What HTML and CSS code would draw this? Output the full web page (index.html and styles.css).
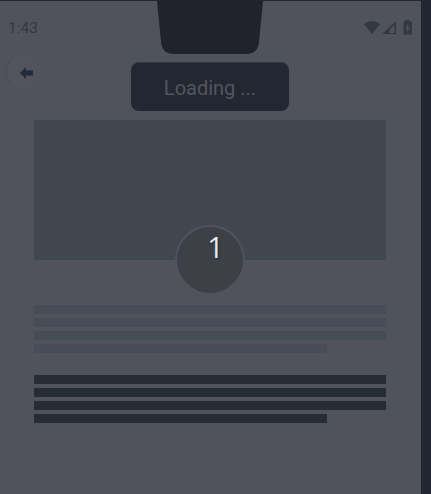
FILE: index.html
```html
<!DOCTYPE html>
<html lang="en">
<head>
<meta charset="utf-8">
<title>Loading</title>
<link rel="stylesheet" href="styles.css">
</head>
<body>
<main class="screen">
  <svg class="notch" width="106" height="53" viewBox="0 0 106 53"><path d="M0 0H106L102 41Q101 53 89 53H17Q5 53 4 41Z" fill="#20232b"/></svg>
  <header class="status">
    <span class="time">1:43</span>
    <svg class="signals" width="49" height="16" viewBox="0 0 49 16" fill="#343841">
      <path d="M0 4Q8-2 16 4L8 14Z"/>
      <path fill-rule="evenodd" d="M18 14L32 1V14ZM25.500 13H30.500V4.800L25.500 9.500Z"/>
      <path fill-rule="evenodd" d="M41.500 0H45.500V1.500H48V14.500H39.500V1.500H41.500ZM44 4L41.500 8.500H43.200V12L46 7.500H44Z"/>
    </svg>
  </header>
  <div class="toolbar">
    <button class="back" aria-label="Back"><svg width="13" height="12" viewBox="0 0 13 12"><path d="M0 6L6 0V3.500H13V8.500H6V12Z" fill="#232a38"/></svg></button>
    <div class="loading">Loading ...</div>
  </div>
  <section class="content">
    <div class="hero"><div class="counter">1</div></div>
    <div class="lines light"><i></i><i></i><i></i><i></i></div>
    <div class="lines dark"><i></i><i></i><i></i><i></i></div>
  </section>
</main>
</body>
</html>
```
FILE: styles.css
```css
* { box-sizing: border-box; }
body {
  margin: 0;
  height: 494px;
  overflow: hidden;
  background: #222630;
  font-family: Roboto, sans-serif;
}
.screen {
  position: relative;
  width: 421px;
  height: 493px;
  margin-top: 1px;
  background: #50535b;
}
.notch { position: absolute; left: 157px; top: 0; }
.status {
  display: flex;
  justify-content: space-between;
  height: 51px;
  padding: 19px 8px 0;
}
.time {
  font-size: 15.5px;
  line-height: 17px;
  color: #34373e;
}
.toolbar {
  display: flex;
  align-items: flex-start;
  height: 68px;
}
.back {
  display: flex;
  align-items: center;
  justify-content: center;
  width: 37px;
  height: 37px;
  margin: 1px 0 0 7px;
  padding: 2px 0 0 1px;
  border: 0;
  border-radius: 50%;
  background: #51545c;
  box-shadow: -1px 0 2px #4b4e54;
}
.loading {
  width: 158px;
  height: 49px;
  margin: 10px 0 0 87px;
  border-radius: 8px;
  border-top: 1px solid #303842;
  background: #222732;
  color: #53565d;
  font-size: 20px;
  line-height: 51px;
  text-align: center;
}
.content { width: 352px; margin-left: 34px; }
.hero {
  position: relative;
  height: 140px;
  margin-bottom: 45px;
  background: #40474e;
}
.counter {
  position: absolute;
  left: 141px;
  top: 105px;
  width: 70px;
  height: 70px;
  padding-left: 11px;
  border: 2px solid #50535b;
  border-radius: 50%;
  background: #3e4047;
  color: #e5edf2;
  font: 29px/40px "Open Sans", sans-serif;
  text-align: center;
  text-shadow: 1px 1px 2px #20232a;
}
.lines { display: grid; gap: 4px; }
.lines i { height: 9px; }
.lines i:last-child { width: 293px; }
.light { margin-bottom: 22px; }
.light i { background: #474d57; }
.dark i { background: #262d34; }
```
